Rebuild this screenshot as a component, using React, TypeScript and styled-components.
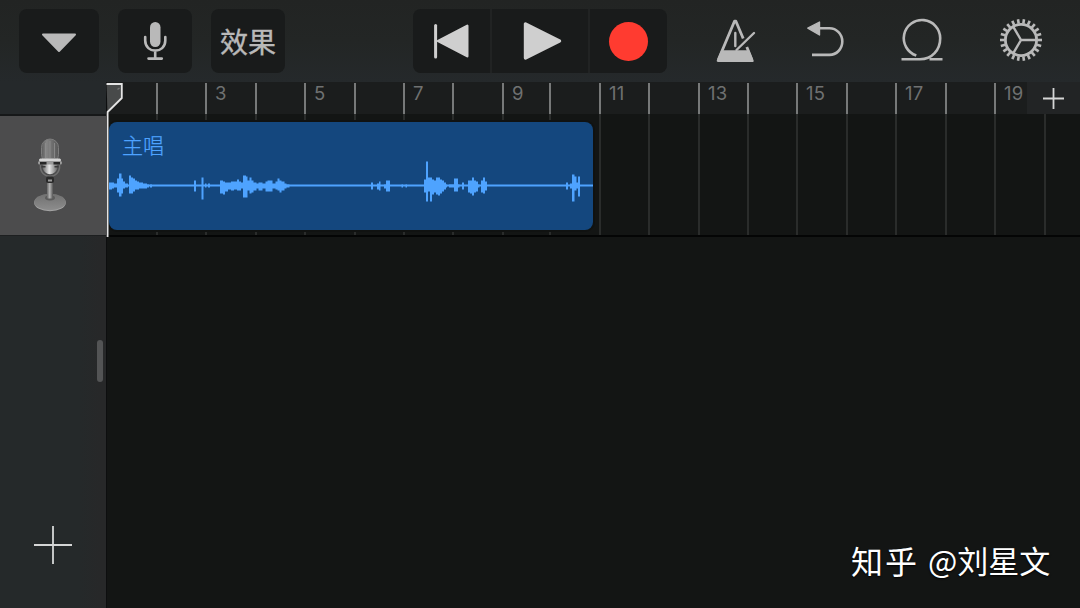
import React from 'react';
import styled, { createGlobalStyle } from 'styled-components';

const GlobalStyle = createGlobalStyle`
  * {
    box-sizing: border-box;
  }

  body {
    margin: 0;
    background: #131514;
    font-family: Inter, 'Liberation Sans', 'Noto Sans CJK SC', sans-serif;
  }
`;

const Screen = styled.div`
  width: 1080px;
  height: 608px;
  display: flex;
  flex-direction: column;
  position: relative;
  overflow: hidden;
  background: #131514;
`;

const Toolbar = styled.header`
  flex: 0 0 82px;
  display: flex;
  align-items: flex-start;
  padding: 9px 35px 0 19px;
  background: linear-gradient(#222423, #232625 50%, #25292b);
`;

const ButtonGroup = styled.div<{ $gap?: number; $ml?: number }>`
  display: flex;
  gap: ${props => props.$gap ?? 0}px;
  margin-left: ${props => props.$ml ?? 0}px;
`;

const ToolButton = styled.button<{ $width: number }>`
  width: ${props => props.$width}px;
  height: 64px;
  display: flex;
  align-items: center;
  justify-content: center;
  padding: 0;
  border: 0;
  border-radius: 8px;
  background: #191b1b;
  color: #b9b9b9;
  font-family: 'Noto Sans CJK SC', sans-serif;
  font-size: 28px;
  font-weight: 400;
  line-height: 64px;
  white-space: nowrap;
  -webkit-text-stroke: 0.4px #b9b9b9;
`;

const Transport = styled(ButtonGroup)`
  border-radius: 8px;
  overflow: hidden;
  background: #212323;

  ${ToolButton} {
    border-radius: 0;
  }
`;

const RecordDot = styled.span`
  width: 39px;
  height: 39px;
  border-radius: 50%;
  background: #ff3b30;
`;

const PlainButton = styled.button`
  width: 48px;
  height: 62px;
  display: flex;
  align-items: center;
  justify-content: center;
  padding: 0;
  border: 0;
  background: none;
  color: #b9b9b9;
`;

const Workspace = styled.main`
  flex: 1;
  display: flex;
  min-height: 0;
`;

const Sidebar = styled.aside`
  flex: 0 0 107px;
  display: flex;
  flex-direction: column;
  background: linear-gradient(90deg, #25292a 80px, #272829 100px);
`;

const SidebarCorner = styled.div`
  height: 34px;
  background: #25292b;
  border-bottom: 2px solid #161819;
`;

const TrackHeader = styled.div`
  height: 120px;
  display: flex;
  align-items: center;
  padding: 0 0 1px 33px;
  background: #4c4c4d;
  border-bottom: 1px solid #1d1f20;
`;

const SidebarBody = styled.div`
  flex: 1;
  display: flex;
  flex-direction: column;
  justify-content: space-between;
  padding: 104px 4px 44px 34px;
`;

const Grip = styled.span`
  align-self: flex-end;
  width: 6px;
  height: 42px;
  border-radius: 3px;
  background: #535455;
`;

const Timeline = styled.section`
  flex: 1;
  min-width: 0;
  display: flex;
  flex-direction: column;
  border-left: 1px solid #0d0e0f;
  margin-left: -1px;
`;

const Ruler = styled.div`
  height: 32px;
  display: flex;
  background: #1b1d1d;
`;

const Bars = styled.div`
  flex: 1;
  min-width: 0;
  display: flex;
  overflow: hidden;
  padding-top: 1px;
`;

const Bar = styled.div<{ $width: number; $first: boolean }>`
  flex: 0 0 ${props => props.$width}px;
  padding-left: 8px;
  border-left: ${props => (props.$first ? '0' : '2px solid #777979')};
  color: #6f7171;
  font-size: 18.5px;
  letter-spacing: 0.3px;
  line-height: 20px;
`;

const AddSection = styled.div`
  flex: 0 0 53px;
  display: flex;
  align-items: center;
  justify-content: center;
  background: #222425;
`;

const Lane = styled.div`
  height: 123px;
  position: relative;
  display: flex;
  overflow: hidden;
  border-bottom: 2px solid #040505;
`;

const GridCell = styled.div<{ $width: number; $first: boolean }>`
  flex: 0 0 ${props => props.$width}px;
  border-left: ${props => (props.$first ? '0' : '2px solid #2a2c2b')};
`;

const Region = styled.article`
  position: absolute;
  left: 2px;
  top: 8px;
  width: 484px;
  height: 108px;
  border-radius: 8px;
  overflow: hidden;
  background: #14477e;
  box-shadow: 0 0 0 2px #101211;
`;

const RegionName = styled.div`
  padding: 7px 0 0 13px;
  color: #4ea3ff;
  font-family: 'Noto Sans CJK SC', sans-serif;
  font-size: 21px;
  font-weight: 300;
  line-height: 30px;
  -webkit-text-stroke: 0.25px #4ea3ff;
`;

const Wave = styled.svg`
  position: absolute;
  left: 0;
  top: 0;
`;

const Playhead = styled.svg`
  position: absolute;
  left: 106px;
  top: 82px;
`;

const Watermark = styled.div`
  position: absolute;
  left: 851px;
  top: 537px;
  display: flex;
  color: #fff;
  font-family: 'Noto Sans CJK SC', sans-serif;
  font-size: 31px;
  line-height: 46px;
  white-space: nowrap;
  text-shadow: 0 1px 2px #000;
`;

const Brand = styled.span`
  width: 77px;
  font-size: 32px;
  font-weight: 400;
  letter-spacing: 2px;
`;

// x of every bar line, the first one is the start of the song
const BAR_LINES = [
  107, 156, 205, 255, 304, 354, 403, 452, 502, 549, 599, 648, 698, 747, 796, 846, 895, 945, 994, 1044, 1093,
];

const bars = BAR_LINES.slice(0, -1).map((x, index) => ({
  number: index + 1,
  width: BAR_LINES[index + 1] - x,
}));

// [x, width, peak above the centre line, peak below it]
const PEAKS: [number, number, number, number][] = [
  [0, 3, 3, 4], [3, 2, 3, 3], [5, 3, 2, 2], [8, 2, 7, 7], [10, 2.5, 12, 11], [12.5, 1.5, 7, 8], [14, 2, 4, 3],
  [16, 3, 2, 2], [20, 2, 10, 8], [22, 2, 8, 8], [24, 2, 7, 6], [26, 2, 5, 4], [28, 2, 4, 4], [30, 4, 3, 3],
  [34, 4, 2, 3], [38, 2, 1, 2], [41, 2, 1, 2],
  [85, 2, 5, 6], [92.5, 2, 8, 14], [96, 1.5, 2, 2], [99, 2, 2, 2],
  [111, 3, 5, 8], [114, 2, 4, 9], [116, 3, 3, 6], [119, 3, 3, 4], [122, 3, 4, 5], [125, 3, 4, 4], [128, 2, 6, 5],
  [130, 2, 4, 5], [132, 2, 3, 3], [134, 3, 10, 12], [137, 1.5, 9, 12], [138.5, 2, 5, 5], [140.5, 2, 8, 8],
  [142.5, 2, 5, 7], [144.5, 3, 3, 5], [147.5, 2, 2, 3], [149.5, 4, 3, 5], [153.5, 3, 2, 3], [156.5, 2, 4, 6],
  [158.5, 5, 5, 6], [163.5, 3, 2, 3], [166.5, 2, 4, 4], [168.5, 2, 7, 5], [170.5, 2, 5, 7], [172.5, 3, 4, 5],
  [175.5, 2, 2, 3], [177.5, 3, 1, 2],
  [262, 2, 3, 4], [268, 2, 2, 4], [270, 1.5, 4, 5], [275, 2, 1, 3], [277, 4, 5, 6],
  [292.5, 1.5, 1, 2], [296.5, 1.5, 1, 2],
  [315, 2, 6, 7], [317, 2, 24, 16], [319, 2, 8, 6], [321, 2, 8, 16], [323, 2, 6, 9], [325, 2, 5, 7],
  [327, 2, 8, 9], [329, 2, 8, 10], [331, 2, 6, 8], [333, 2, 5, 6], [335, 2, 3, 4], [337, 1, 1, 2],
  [340, 5, 1, 2], [345, 4, 7, 6], [349, 1.5, 1, 2], [353, 2, 3, 4],
  [359, 2, 5, 7], [361, 2, 5, 8], [363, 2, 8, 10], [365, 2, 5, 7], [367, 2, 4, 6], [369, 1.5, 1, 2],
  [372, 2, 5, 7], [374, 2, 8, 8], [376, 2, 4, 5],
  [457, 2, 3, 4], [461, 2, 2, 3], [463, 2.5, 11, 16], [465.5, 2, 9, 5], [467.5, 1.5, 3, 3], [469, 2, 9, 11],
];

const wavePath = PEAKS.map(([x, width, up, down]) => `M${x} ${63.5 - up}h${width}v${up + down}h-${width}Z`).join('');

const gearTeeth = Array.from({ length: 22 }, (_, index) => (index * 360) / 22);

const DropdownIcon = () => (
  <svg width="36" height="24" viewBox="0 -4 36 24">
    <path d="M2 1.5H34L18 18Z" fill="currentColor" stroke="currentColor" strokeWidth="2" strokeLinejoin="round" />
  </svg>
);

const MicIcon = () => (
  <svg width="25" height="40" viewBox="0 0 25 40">
    <rect x="7" y="1" width="10.5" height="25" rx="5.2" fill="currentColor" />
    <path
      d="M2.2 16V19.5C2.2 33 22.3 33 22.3 19.5V16M12.2 30V37.5M5.5 37.6H18.8"
      fill="none"
      stroke="currentColor"
      strokeWidth="2.6"
      strokeLinecap="round"
    />
  </svg>
);

const RewindIcon = () => (
  <svg width="37" height="38" viewBox="0 0 37 38">
    <path d="M2.6 3.5V35" stroke="#cfcfcf" strokeWidth="3" strokeLinecap="round" />
    <path d="M5 19L34.3 3.7V34.3Z" fill="#cfcfcf" stroke="#cfcfcf" strokeWidth="2.4" strokeLinejoin="round" />
  </svg>
);

const PlayIcon = () => (
  <svg width="44" height="40" viewBox="-4 0 44 40">
    <path d="M3.5 3V37L37.5 20Z" fill="#cfcfcf" stroke="#cfcfcf" strokeWidth="3.4" strokeLinejoin="round" />
  </svg>
);

const MetronomeIcon = () => (
  <svg width="42" height="46" viewBox="0 0 42 46">
    <path
      d="M3.2 43L19.5 4.2H20.9L28.2 21.5M31.8 30L37 43"
      fill="none"
      stroke="currentColor"
      strokeWidth="2.8"
      strokeLinejoin="round"
    />
    <path d="M6.2 33.3H34.2L38.6 43.6Q39 45 38 45H3Q1.3 45 1.8 43.6Z" fill="currentColor" />
    <path d="M20.3 16V29M21.5 33L39 16" stroke="currentColor" strokeWidth="2.4" strokeLinecap="round" />
  </svg>
);

const UndoIcon = () => (
  <svg width="38" height="38" viewBox="0 0 38 38">
    <path d="M12 7.3H23.5A12.8 13.3 0 0 1 23.5 33.9H6" fill="none" stroke="currentColor" strokeWidth="2.6" />
    <path d="M1.8 7.2L13.5 1V14Z" fill="currentColor" stroke="currentColor" strokeWidth="1.4" strokeLinejoin="round" />
  </svg>
);

const LoopIcon = () => (
  <svg width="44" height="46" viewBox="0 0 44 46">
    <path
      d="M1.5 42.3H20C32 42.3 40.2 33 40.2 21.2A18.2 18.2 0 1 0 16.3 38.5M29.5 42.3H42.5"
      fill="none"
      stroke="currentColor"
      strokeWidth="2.6"
    />
  </svg>
);

const GearIcon = () => (
  <svg width="44" height="44" viewBox="-22 -22 44 44" fill="none" stroke="currentColor">
    <circle r="15.6" strokeWidth="2.8" />
    <path d="M0 0H15.5M0 0L-7.8 -13.4M0 0L-7.8 13.4" strokeWidth="2.4" />
    {gearTeeth.map(angle => (
      <path key={angle} d="M16.5 0H21" strokeWidth="2.6" transform={`rotate(${angle})`} />
    ))}
  </svg>
);

const PlusIcon: React.FC<{ size: number; weight: number }> = ({ size, weight }) => (
  <svg width={size} height={size} viewBox={`0 0 ${size} ${size}`}>
    <path d={`M${size / 2} 0V${size}M0 ${size / 2}H${size}`} stroke="#d5d6d6" strokeWidth={weight} />
  </svg>
);

const StudioMic = () => (
  <svg width="34" height="76" viewBox="0 0 34 76">
    <defs>
      <linearGradient id="mesh">
        <stop offset="0" stopColor="#5c5c5c" />
        <stop offset="0.3" stopColor="#858585" />
        <stop offset="0.6" stopColor="#707070" />
        <stop offset="1" stopColor="#585858" />
      </linearGradient>
      <linearGradient id="chrome">
        <stop offset="0" stopColor="#666" />
        <stop offset="0.45" stopColor="#e6e6e6" />
        <stop offset="1" stopColor="#666" />
      </linearGradient>
      <linearGradient id="stem">
        <stop offset="0" stopColor="#666" />
        <stop offset="0.45" stopColor="#b4b4b4" />
        <stop offset="1" stopColor="#555" />
      </linearGradient>
      <linearGradient id="base" x2="0" y2="1">
        <stop offset="0" stopColor="#707070" />
        <stop offset="1" stopColor="#8d8d8d" />
      </linearGradient>
    </defs>
    <ellipse cx="17" cy="65.8" rx="15.8" ry="8.4" fill="#a4a4a4" />
    <ellipse cx="17" cy="65" rx="15.8" ry="8.2" fill="url(#base)" />
    <ellipse cx="17" cy="61" rx="5" ry="2.4" fill="#5c5c5c" />
    <rect x="14" y="44" width="6" height="17.5" rx="1" fill="url(#stem)" />
    <path d="M7.5 28C6 43 28 43 26.5 28" fill="none" stroke="#6f6f6f" strokeWidth="1.5" />
    <rect x="8.5" y="2" width="17" height="24" rx="8.5" fill="url(#mesh)" stroke="#7d7d7d" strokeWidth="1" />
    <path d="M12.5 6V21M17 4V21M21.5 6V21" stroke="#8f8f8f" strokeWidth="0.8" />
    <path d="M9.5 27H24.5V30C23.5 39.5 10.5 39.5 9.5 30Z" fill="url(#chrome)" />
    <rect x="6" y="21.5" width="22" height="3" rx="1.5" fill="#d4d4d4" />
    <rect x="5" y="24" width="24" height="3.4" rx="1.5" fill="#9a9a9a" />
    <path d="M7 26.3H13.5M20.5 26.3H27" stroke="#262626" strokeWidth="2.6" />
    <path d="M8.5 29.8H12.5M21.5 29.8H25.5" stroke="#3a3a3a" strokeWidth="1.6" />
    <rect x="13" y="39.5" width="8" height="6.5" rx="2" fill="#2a2a2a" />
    <path d="M15 43.5H19" stroke="#999" strokeWidth="2" />
  </svg>
);

const App: React.FC = () => (
  <>
    <GlobalStyle />
    <Screen>
      <Toolbar>
        <ButtonGroup $gap={19}>
          <ToolButton $width={80}><DropdownIcon /></ToolButton>
          <ToolButton $width={74}><MicIcon /></ToolButton>
          <ToolButton $width={74}>效果</ToolButton>
        </ButtonGroup>
        <Transport $gap={2} $ml={128}>
          <ToolButton $width={77}><RewindIcon /></ToolButton>
          <ToolButton $width={96}><PlayIcon /></ToolButton>
          <ToolButton $width={77}><RecordDot /></ToolButton>
        </Transport>
        <ButtonGroup $gap={41} $ml={45}>
          <PlainButton><MetronomeIcon /></PlainButton>
          <PlainButton><UndoIcon /></PlainButton>
        </ButtonGroup>
        <ButtonGroup $gap={51} $ml={49}>
          <PlainButton><LoopIcon /></PlainButton>
          <PlainButton><GearIcon /></PlainButton>
        </ButtonGroup>
      </Toolbar>

      <Workspace>
        <Sidebar>
          <SidebarCorner />
          <TrackHeader><StudioMic /></TrackHeader>
          <SidebarBody>
            <Grip />
            <PlusIcon size={38} weight={1.8} />
          </SidebarBody>
        </Sidebar>

        <Timeline>
          <Ruler>
            <Bars>
              {bars.map(({ number, width }) => (
                <Bar key={number} $width={width} $first={number === 1}>
                  {number % 2 === 1 && number}
                </Bar>
              ))}
            </Bars>
            <AddSection><PlusIcon size={21} weight={1.8} /></AddSection>
          </Ruler>
          <Lane>
            {bars.map(({ number, width }) => (
              <GridCell key={number} $width={width} $first={number === 1} />
            ))}
            <Region>
              <RegionName>主唱</RegionName>
              <Wave width="484" height="108" viewBox="0 0 484 108">
                <path d="M0 63.5H484" stroke="#4ea3ff" strokeWidth="1.8" />
                <path d={wavePath} fill="#4ea3ff" />
              </Wave>
            </Region>
          </Lane>
        </Timeline>
      </Workspace>

      <Playhead width="18" height="156" viewBox="0 0 18 156">
        <path d="M0.5 2H15.8V16L1.5 30" fill="#484a4a" />
        <path d="M0.5 2H15.8V16L1.6 30V155" fill="none" stroke="#e4e4e4" strokeWidth="1.8" />
        <path d="M11.5 7.5L13.5 6" stroke="#777" strokeWidth="1.4" />
      </Playhead>

      <Watermark>
        <Brand>知乎</Brand>
        <span>@刘星文</span>
      </Watermark>
    </Screen>
  </>
);

export default App;
